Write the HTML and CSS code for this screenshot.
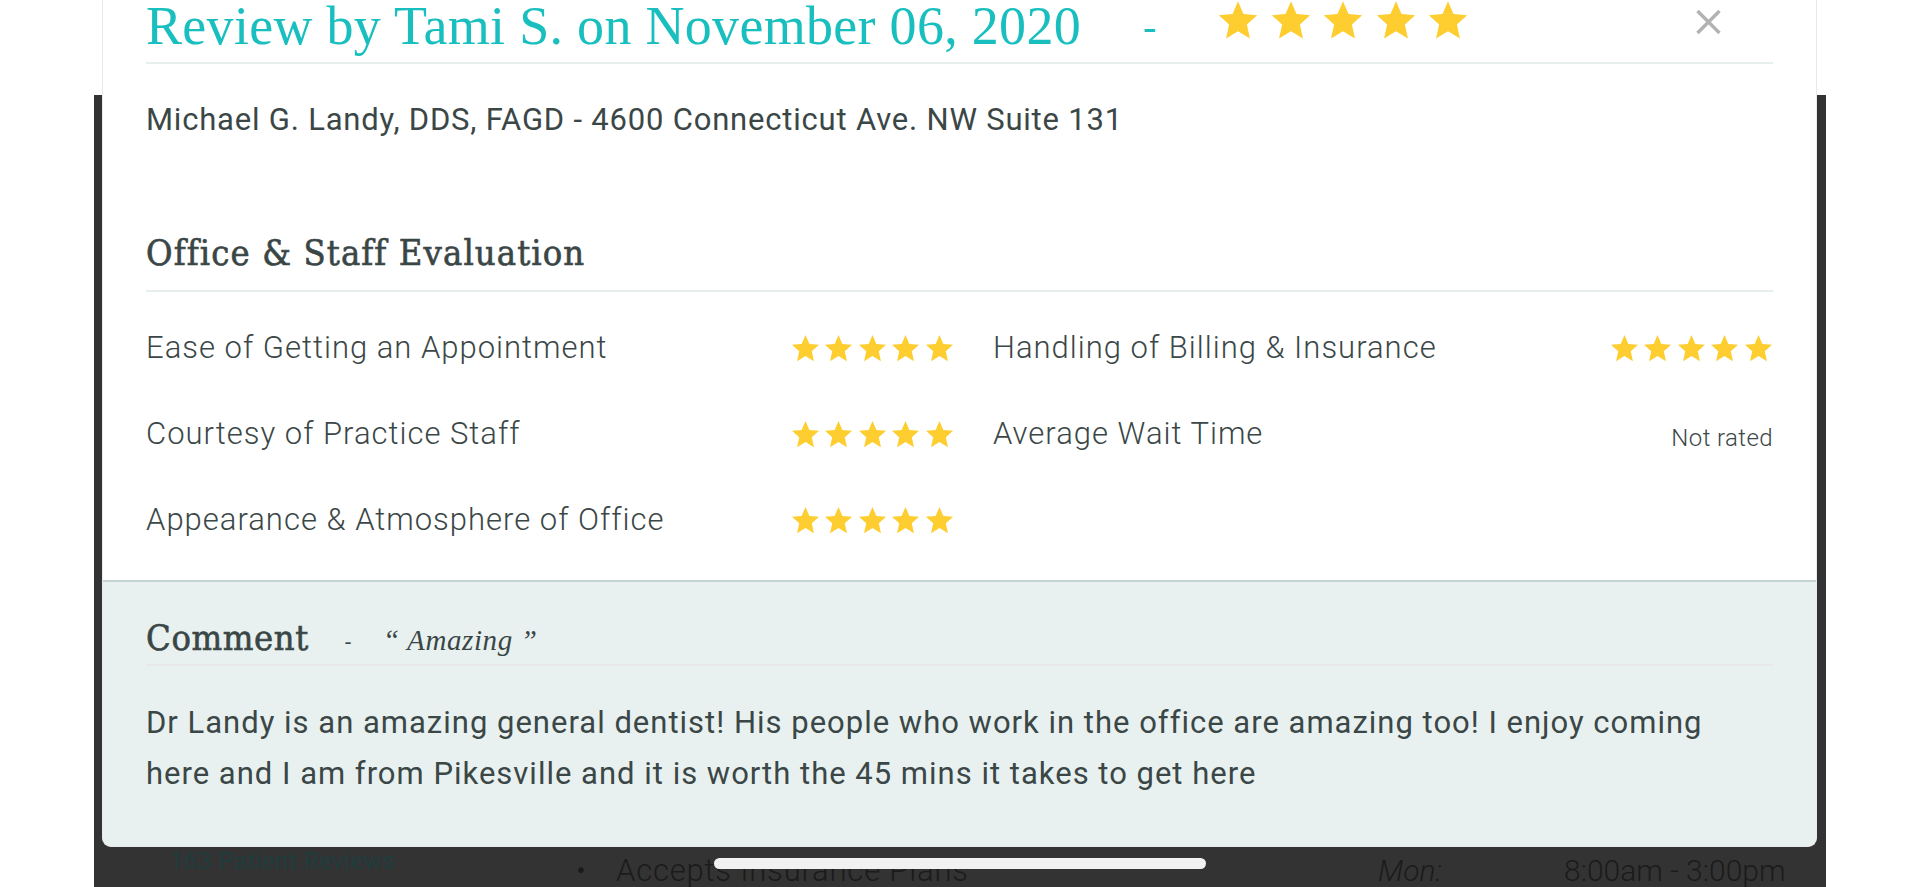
FILE: index.html
```html
<!DOCTYPE html>
<html lang="en">
<head>
    <meta charset="UTF-8">
    <meta name="viewport" content="width=device-width, initial-scale=1.0">
    <title>Review by Tami S.</title>
    <link rel="stylesheet" href="styles.css">
</head>
<body>

    <svg width="0" height="0" class="defs">
        <symbol id="star" viewBox="0 0 24 24">
            <polygon points="12,0.8 15.2,8.2 23.2,8.9 17.2,14.3 19,22.6 12,18.3 5,22.6 6.8,14.3 0.8,8.9 8.8,8.2" />
        </symbol>
    </svg>

    <!-- page behind the modal -->
    <div class="backdrop">
        <div class="under-row">
            <a class="reviews-link" href="#">163 Patient Reviews</a>
            <ul class="features">
                <li>Accepts Insurance Plans</li>
            </ul>
            <div class="hours">
                <span class="day">Mon:</span>
                <span>8:00am - 3:00pm</span>
            </div>
        </div>
    </div>

    <div class="modal">
        <div class="modal-head">
            <h1 class="review-title">Review by Tami S. on November 06, 2020</h1>
            <span class="title-dash">-</span>
            <div class="stars stars-big">
                <svg><use href="#star"/></svg>
                <svg><use href="#star"/></svg>
                <svg><use href="#star"/></svg>
                <svg><use href="#star"/></svg>
                <svg><use href="#star"/></svg>
            </div>
            <button class="close-btn" aria-label="Close">
                <svg viewBox="0 0 28 28"><path d="M3 3 L25 25 M25 3 L3 25" /></svg>
            </button>
        </div>

        <p class="practice">Michael G. Landy, DDS, FAGD - 4600 Connecticut Ave. NW Suite 131</p>

        <h2 class="section-title">Office &amp; Staff Evaluation</h2>

        <div class="ratings">
            <div class="rating-row">
                <span class="rating-label">Ease of Getting an Appointment</span>
                <div class="stars">
                    <svg><use href="#star"/></svg><svg><use href="#star"/></svg><svg><use href="#star"/></svg><svg><use href="#star"/></svg><svg><use href="#star"/></svg>
                </div>
            </div>
            <div class="rating-row">
                <span class="rating-label">Handling of Billing &amp; Insurance</span>
                <div class="stars">
                    <svg><use href="#star"/></svg><svg><use href="#star"/></svg><svg><use href="#star"/></svg><svg><use href="#star"/></svg><svg><use href="#star"/></svg>
                </div>
            </div>
            <div class="rating-row">
                <span class="rating-label">Courtesy of Practice Staff</span>
                <div class="stars">
                    <svg><use href="#star"/></svg><svg><use href="#star"/></svg><svg><use href="#star"/></svg><svg><use href="#star"/></svg><svg><use href="#star"/></svg>
                </div>
            </div>
            <div class="rating-row">
                <span class="rating-label">Average Wait Time</span>
                <span class="not-rated">Not rated</span>
            </div>
            <div class="rating-row">
                <span class="rating-label">Appearance &amp; Atmosphere of Office</span>
                <div class="stars">
                    <svg><use href="#star"/></svg><svg><use href="#star"/></svg><svg><use href="#star"/></svg><svg><use href="#star"/></svg><svg><use href="#star"/></svg>
                </div>
            </div>
        </div>

        <div class="comment">
            <div class="comment-head">
                <h2 class="comment-title">Comment</h2>
                <span class="comment-dash">-</span>
                <span class="comment-quote">&ldquo; Amazing &rdquo;</span>
            </div>
            <p class="comment-text">Dr Landy is an amazing general dentist! His people who work in the office are amazing too! I enjoy coming here and I am from Pikesville and it is worth the 45 mins it takes to get here</p>
        </div>
    </div>

    <div class="home-bar"></div>

</body>
</html>
```

FILE: styles.css
```css
body {
    margin: 0;
    background: #fff;
    font-family: Roboto, "Liberation Sans", sans-serif;
    color: #3b4747;
    height: 887px;
    overflow: hidden;
    position: relative;
}
.defs { position: absolute; }

/* page behind */
.backdrop {
    margin: 95px 0 0 94px;
    width: 1732px;
    height: 792px;
    background: #333;
    overflow: hidden;
    box-sizing: border-box;
    padding-top: 752px;
}
.under-row {
    display: grid;
    grid-template-columns: 410px 798px 1fr;
    padding-left: 76px;
    color: #1b1b1b;
}
.reviews-link {
    color: #1f3d3d;
    text-decoration: none;
    font-size: 24px;
    line-height: 28px;
    letter-spacing: 0.5px;
}
.features {
    margin: 4px 0 0;
    padding-left: 0;
    list-style: none;
    font-size: 31px;
    line-height: 40px;
    font-weight: 300;
    letter-spacing: 0.8px;
}
.features li::before {
    content: "\2022";
    display: inline-block;
    width: 40px;
    margin-left: -4px;
    font-size: 30px;
}
.hours {
    display: grid;
    grid-template-columns: 186px auto;
    margin-top: 4px;
    font-size: 30px;
    line-height: 40px;
    font-weight: 300;
}
.hours .day { font-style: italic; }

/* modal */
.modal {
    position: absolute;
    top: 0;
    left: 102px;
    width: 1715px;
    box-sizing: border-box;
    background: #fff;
    border: 1px solid #e9eaea;
    border-top: none;
    border-radius: 0 0 9px 9px;
    overflow: hidden;
}
.modal-head {
    display: flex;
    align-items: flex-start;
    margin: 0 43px 0 43px;
    padding-bottom: 9px;
    border-bottom: 2px solid #e7efee;
}
.review-title {
    margin: 0;
    font-family: "Liberation Serif", serif;
    font-weight: normal;
    font-size: 54px;
    line-height: 53px;
    letter-spacing: 0.3px;
    color: #19bfbf;
}
.title-dash {
    font-family: "Liberation Serif", serif;
    font-size: 40px;
    line-height: 53px;
    color: #19bfbf;
    margin-left: 62px;
}
.stars { display: flex; gap: 4.6px; color: #fecd2f; }
.stars svg { width: 29px; height: 29px; fill: currentColor; }
.stars-big { margin-left: 61px; gap: 10.5px; }
.stars-big svg { width: 42px; height: 41px; }
.close-btn {
    margin-left: auto;
    margin-right: 50px;
    margin-top: 8px;
    padding: 0;
    border: none;
    background: none;
    cursor: pointer;
}
.close-btn svg {
    width: 29px;
    height: 28px;
    stroke: #b2b2b2;
    stroke-width: 3.4;
    fill: none;
}

.practice {
    margin: 36px 43px 0;
    font-size: 31px;
    line-height: 40px;
    letter-spacing: 0.8px;
}
.section-title {
    margin: 91px 43px 0;
    padding-bottom: 15px;
    border-bottom: 2px solid #e7efee;
    font-family: "DejaVu Serif", "Liberation Serif", serif;
    font-stretch: condensed;
    font-weight: normal;
    font-size: 36px;
    line-height: 44px;
    letter-spacing: 1.1px;
    -webkit-text-stroke: 0.6px #3a4646;
    color: #3a4646;
}

.ratings {
    display: grid;
    grid-template-columns: 808px 1fr;
    column-gap: 39px;
    margin: 13px 43px 0;
    padding-bottom: 17px;
}
.rating-row {
    display: flex;
    align-items: center;
    justify-content: space-between;
    height: 86px;
}
.rating-label {
    font-size: 31px;
    font-weight: 300;
    line-height: 86px;
    letter-spacing: 1px;
}
.not-rated {
    font-size: 24px;
    font-weight: 300;
    padding-top: 8px;
    letter-spacing: 0.4px;
}

.comment {
    background: #e8f1f0;
    border-top: 2px solid #c6d3d5;
    padding: 34px 43px 47px;
}
.comment-head {
    display: flex;
    align-items: baseline;
    padding-bottom: 4px;
    border-bottom: 2px solid #e8e8e8;
}
.comment-title {
    margin: 0;
    font-family: "DejaVu Serif", "Liberation Serif", serif;
    font-stretch: condensed;
    font-weight: normal;
    font-size: 36px;
    line-height: 44px;
    letter-spacing: 0.6px;
    -webkit-text-stroke: 0.6px #3a4646;
    color: #3a4646;
}
.comment-dash {
    margin-left: 36px;
    font-size: 22px;
}
.comment-quote {
    margin-left: 32px;
    font-family: "Liberation Serif", serif;
    font-style: italic;
    font-size: 29px;
    letter-spacing: 0.6px;
    color: #3a4646;
}
.comment-text {
    margin: 31px 0 0;
    font-size: 31px;
    line-height: 51px;
    letter-spacing: 1px;
    max-width: 1600px;
}

.home-bar {
    position: absolute;
    left: 714px;
    top: 858px;
    width: 492px;
    height: 11px;
    border-radius: 6px;
    background: #f1f1f1;
}
```
